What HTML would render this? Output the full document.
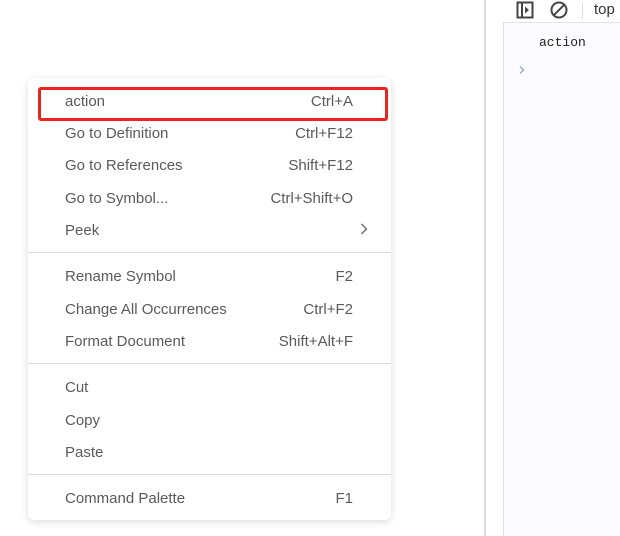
<!DOCTYPE html>
<html><head><meta charset="utf-8"><style>
html,body{margin:0;padding:0;width:620px;height:536px;overflow:hidden;background:#fff;font-family:"Liberation Sans","Noto Sans CJK SC",sans-serif;}
.v1{position:absolute;left:484px;top:0;width:2px;height:536px;background:#dadada}
.rp{position:absolute;left:503px;top:0;width:117px;height:536px;background:#fcfbff;border-left:1px solid #dfe1ea}
.tb{position:absolute;left:503px;top:0;width:117px;height:22px;background:#fff;border-bottom:1px solid #e1e3ea}
.menu{position:absolute;left:28px;top:78px;width:363px;height:442px;background:#fff;border-radius:6px;box-shadow:0 2px 8px rgba(0,0,0,0.14)}
.it{position:absolute;left:37px;width:288px;font-size:15px;color:#5a5a5a;line-height:20px;}
.it span{float:right}
.sep{position:absolute;left:0;width:363px;height:1px;background:#dcdcdc}
.red{position:absolute;left:10px;top:9px;width:344px;height:28px;border:3px solid #e5271f;border-radius:3px}
</style></head><body>
<div class="v1"></div>
<div class="rp"></div>
<div class="tb">
<svg style="position:absolute;left:13px;top:1px" width="18" height="18" viewBox="0 0 18 18"><rect x="1.5" y="1.5" width="15" height="15" fill="none" stroke="#444" stroke-width="2"/><line x1="6" y1="2" x2="6" y2="16" stroke="#444" stroke-width="2"/><path d="M9 5.5 L13 9 L9 12.5Z" fill="#444"/></svg>
<svg style="position:absolute;left:46px;top:0px" width="20" height="20" viewBox="0 0 20 20"><circle cx="10" cy="10" r="7.5" fill="none" stroke="#444" stroke-width="2"/><line x1="4.8" y1="15.2" x2="15.2" y2="4.8" stroke="#444" stroke-width="2"/></svg>
<div style="position:absolute;left:79px;top:3px;width:1px;height:16px;background:#ddd"></div>
<div style="position:absolute;left:91px;top:1px;font-size:15px;color:#333">top</div>
</div>
<div style="position:absolute;left:539px;top:35px;font-family:'Liberation Mono',monospace;font-size:13px;color:#222">action</div>
<svg style="position:absolute;left:518px;top:65px" width="8" height="10" viewBox="0 0 8 10"><path d="M2 1.5 L5.5 5 L2 8.5" fill="none" stroke="#9aa6c8" stroke-width="1.4"/></svg>
<div class="menu">
<div class="red"></div>
<div class="it" style="top:14px">action<span>Ctrl+A</span></div>
<div class="it" style="top:46px">Go to Definition<span>Ctrl+F12</span></div>
<div class="it" style="top:78px">Go to References<span>Shift+F12</span></div>
<div class="it" style="top:111px">Go to Symbol...<span>Ctrl+Shift+O</span></div>
<div class="it" style="top:143px">Peek</div>
<svg style="position:absolute;left:331px;top:144px" width="10" height="14" viewBox="0 0 10 14"><path d="M2.5 2 L7.5 7 L2.5 12" fill="none" stroke="#666" stroke-width="1.3"/></svg>
<div class="sep" style="top:174px"></div>
<div class="it" style="top:189px">Rename Symbol<span>F2</span></div>
<div class="it" style="top:222px">Change All Occurrences<span>Ctrl+F2</span></div>
<div class="it" style="top:254px">Format Document<span>Shift+Alt+F</span></div>
<div class="sep" style="top:285px"></div>
<div class="it" style="top:300px">Cut</div>
<div class="it" style="top:333px">Copy</div>
<div class="it" style="top:365px">Paste</div>
<div class="sep" style="top:396px"></div>
<div class="it" style="top:411px">Command Palette<span>F1</span></div>
</div>
</body></html>
